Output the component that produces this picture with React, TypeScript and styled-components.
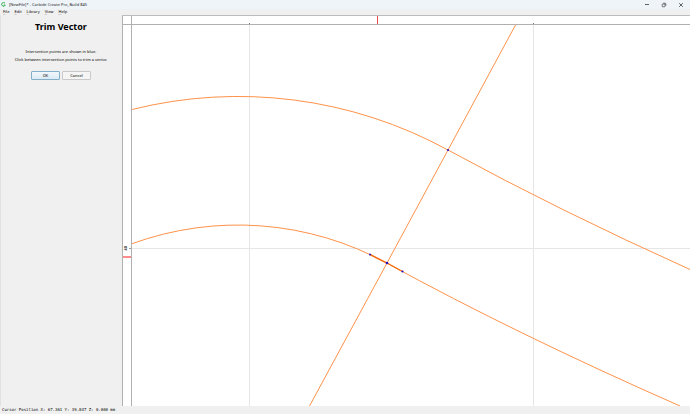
import React from "react";
import styled, { createGlobalStyle } from "styled-components";

const GlobalStyle = createGlobalStyle`
  *, *::before, *::after { box-sizing: border-box; }
  html, body { margin: 0; background: #f0f0f0; }
`;

const Window = styled.div`
  display: flex;
  flex-direction: column;
  height: 100vh;
  overflow: hidden;
  background: #f0f0f0;
  color: #111;
  font-family: "Noto Sans", "Open Sans", sans-serif;
  font-size: 4px;
  line-height: 6px;
`;

const TitleBar = styled.header`
  display: flex;
  align-items: center;
  height: 9px;
  padding: 0 6px 0 1px;
  gap: 3px;
  background: #eff4f9;
  color: #222;
  flex: none;
`;

const AppTitle = styled.span`
  flex: 1;
`;

const WindowControls = styled.div`
  display: flex;
  gap: 11px;
`;

const ControlButton = styled.button`
  display: flex;
  padding: 0;
  border: 0;
  background: none;
  color: #222;
`;

const MenuBar = styled.nav`
  display: flex;
  align-items: center;
  gap: 5px;
  height: 6px;
  padding-left: 3px;
  flex: none;
`;

const MenuButton = styled.button`
  padding: 0;
  border: 0;
  background: none;
  color: #000;
  font: inherit;

  &::first-letter {
    text-decoration: underline;
    text-decoration-color: #ccc;
  }
`;

const Workspace = styled.main`
  display: grid;
  grid-template-columns: 122px 1fr;
  flex: 1;
  min-height: 0;
`;

const ToolPanel = styled.aside`
  display: flex;
  flex-direction: column;
  align-items: center;
  padding: 5px 1px 0 0;
  border-left: 1px solid #e2e2e2;
  text-align: center;
`;

const PanelTitle = styled.h1`
  margin: 0 0 16px;
  color: #000;
  font-size: 9px;
  line-height: 13px;
  font-weight: 700;
`;

const Hint = styled.p`
  margin: 0 0 2px;
  color: #000;
`;

const ButtonRow = styled.div`
  display: flex;
  gap: 2px;
  margin-top: 6px;
`;

const DialogButton = styled.button<{ $primary?: boolean }>`
  width: 29px;
  height: 9px;
  padding: 0;
  border: 1px solid ${(p) => (p.$primary ? "#83afc8" : "#c9c9c9")};
  border-radius: 1px;
  background: ${(p) => (p.$primary ? "linear-gradient(#f1f7fb, #dcebf4)" : "#f5f5f5")};
  color: #000;
  font: inherit;
`;

const Viewport = styled.section`
  display: grid;
  grid-template-columns: 10px 1fr;
  grid-template-rows: 9px 1fr;
  min-width: 0;
  min-height: 0;
  border-top: 1px solid #bcbcbc;
  background: #fff;
`;

const RulerCorner = styled.div`
  border: solid #b0b0b0;
  border-width: 0 1px 1px;
`;

const TopRuler = styled.div`
  overflow: hidden;
  border-bottom: 1px solid #b0b0b0;
`;

const SideRuler = styled.div`
  overflow: hidden;
  border: solid #b0b0b0;
  border-width: 0 1px;
`;

const Drawing = styled.svg`
  display: block;
  width: 100%;
  height: 100%;
`;

const Plot = styled.div`
  overflow: hidden;
  min-width: 0;
  min-height: 0;
`;

const StatusBar = styled.footer`
  height: 8px;
  padding: 1px 2px;
  color: #000;
  font-family: "DejaVu Sans Mono", monospace;
  font-size: 4px;
  white-space: pre;
  flex: none;
`;

const menus = ["File", "Edit", "Library", "View", "Help"];
const gridColumns = [249.5, 533.5];
const intersections = [
  { x: 448, y: 150, r: 1.1 },
  { x: 370, y: 254.5, r: 1 },
  { x: 387, y: 263, r: 1.3 },
  { x: 402.5, y: 271.5, r: 1.1 },
];

export default function App() {
  return (
    <>
      <GlobalStyle />
      <Window>
        <TitleBar>
          <svg width="5" height="5" viewBox="0 0 10 10" aria-hidden="true">
            <path d="M8 2.4A3.7 3.7 0 1 0 8.5 6H5.5" fill="none" stroke="#2fac45" strokeWidth="2" />
          </svg>
          <AppTitle>[NewFile]* - Carbide Create Pro, Build 845</AppTitle>
          <WindowControls>
            <ControlButton aria-label="Minimize">
              <svg width="6" height="6" viewBox="0 0 6 6"><path d="M1 2.5h4" stroke="currentColor" strokeWidth=".7" /></svg>
            </ControlButton>
            <ControlButton aria-label="Restore">
              <svg width="6" height="6" viewBox="0 0 6 6" fill="none" stroke="currentColor" strokeWidth=".6">
                <rect x="1.2" y="2" width="2.8" height="2.8" rx=".6" />
                <path d="M2.2 1.2h1.8q.8 0 .8.8v1.8" />
              </svg>
            </ControlButton>
            <ControlButton aria-label="Close">
              <svg width="6" height="6" viewBox="0 0 6 6"><path d="m1.2 1.2 3.6 3.6m0-3.6L1.2 4.8" stroke="currentColor" strokeWidth=".7" /></svg>
            </ControlButton>
          </WindowControls>
        </TitleBar>
        <MenuBar>
          {menus.map((menu) => (
            <MenuButton key={menu}>{menu}</MenuButton>
          ))}
        </MenuBar>
        <Workspace>
          <ToolPanel>
            <PanelTitle>Trim Vector</PanelTitle>
            <Hint>Intersection points are shown in blue.</Hint>
            <Hint>Click between intersection points to trim a vector.</Hint>
            <ButtonRow>
              <DialogButton $primary>OK</DialogButton>
              <DialogButton>Cancel</DialogButton>
            </ButtonRow>
          </ToolPanel>
          <Viewport>
            <RulerCorner />
            <TopRuler>
              <Drawing viewBox="132 16 558 8" preserveAspectRatio="xMinYMin slice" aria-hidden="true">
                {gridColumns.map((x) => (
                  <path key={x} d={`M${x} 23v1`} stroke="#777" />
                ))}
                <path d="M377.5 16v8" stroke="#e84a4a" />
              </Drawing>
            </TopRuler>
            <SideRuler>
              <Drawing viewBox="123 25 8 381" preserveAspectRatio="xMinYMin slice">
                <text
                  transform="translate(127 250.5) rotate(-90)"
                  fontFamily="Open Sans, sans-serif"
                  fontSize="4"
                  fontWeight="700"
                  fill="#333"
                >
                  40
                </text>
                <path d="M129 248.5h2" stroke="#999" />
                <path d="M123 257h8" stroke="#ff8c8c" strokeWidth="2" />
              </Drawing>
            </SideRuler>
            <Plot>
              <Drawing viewBox="132 25 558 381" preserveAspectRatio="xMinYMin slice" role="img" aria-label="Vector drawing">
                <path d="M249.5 25v381M533.5 25v381M132 248.5h558" stroke="#e6e6e6" />
                <g fill="none" stroke="#ff924a">
                  <path d="M132 109.5A438 438 0 0 1 448 150Q558 210 690 269.5" />
                  <path d="M132 243.7A310 310 0 0 1 387 263.2Q515.5 333.6 680 406" />
                  <path d="M515.5 25 448 150 387 263 309.5 406" />
                  <path d="M370 254.5 387 263 402.5 271.5" stroke="#f36c12" strokeWidth="1.4" />
                </g>
                {intersections.map(({ x, y, r }) => (
                  <circle key={`${x}-${y}`} cx={x} cy={y} r={r} fill="#2314c8" />
                ))}
              </Drawing>
            </Plot>
          </Viewport>
        </Workspace>
        <StatusBar>Cursor Position X: 67.361 Y: 39.847 Z: 0.000 mm</StatusBar>
      </Window>
    </>
  );
}
